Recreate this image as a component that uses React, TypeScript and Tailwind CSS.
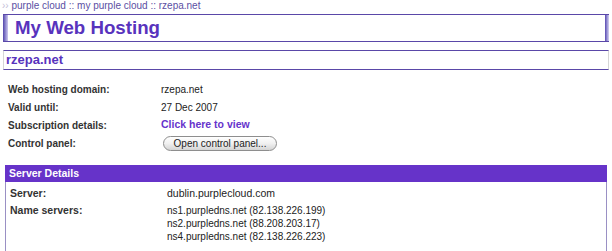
import React from "react";

const rows = [
  { label: "Web hosting domain:", value: "rzepa.net" },
  { label: "Valid until:", value: "27 Dec 2007" },
];

function InfoRow({ label, children }: React.PropsWithChildren<{ label: string }>) {
  return (
    <div className="flex h-[18px] items-center">
      <div className="w-[153px] text-[10px] font-bold text-[#333]">{label}</div>
      <div className="text-[10px] text-[#222]">{children}</div>
    </div>
  );
}

function App() {
  return (
    <div className="w-[612px] h-[251px] overflow-hidden bg-white font-['Liberation_Sans',Arial,sans-serif]">
      <div className="h-[14px] pl-[2px] text-[10px] leading-[12px] text-[#5b4fa3]">
        <span className="text-[#c4c0d8]">››</span> purple cloud :: my purple cloud :: rzepa.net
      </div>

      <div className="mx-[3px] flex h-[28px] border-y border-[#5a47a8]">
        <div className="w-[5px] bg-gradient-to-r from-[#5544aa] to-[#cfc8ee]" />
        <h1 className="flex-1 pl-[7px] text-[18.7px] font-bold leading-[26px] text-[#5833bd]">
          My Web Hosting
        </h1>
        <div className="w-[4px] bg-gradient-to-r from-[#5a47b0] to-[#d8d3f0]" />
      </div>

      <div className="mx-[3px] mt-[8px] h-[20px] border-y border-[#5a47a8] border-x-[#d6d6d6] border-x pl-[2px] text-[13px] font-bold leading-[18px] text-[#5833bd]">
        rzepa.net
      </div>

      <div className="mt-[10px] pl-[8px]">
        {rows.map(r => (
          <InfoRow key={r.label} label={r.label}>
            {r.value}
          </InfoRow>
        ))}
        <InfoRow label="Subscription details:">
          <span className="text-[10.5px] font-bold text-[#6633cc]">Click here to view</span>
        </InfoRow>
        <InfoRow label="Control panel:">
          <button className="ml-[2px] h-[15px] w-[114px] rounded-full border border-[#8e8e8e] bg-gradient-to-b from-white via-[#f0f0f0] to-[#d4d4d4] text-[10px] leading-[13px] text-[#222]">
            Open control panel...
          </button>
        </InfoRow>
      </div>

      <div className="mx-[5px] mt-[13px]">
        <div className="h-[17px] bg-[#6633c9] pl-[4px] text-[10.5px] font-bold leading-[17px] text-white">
          Server Details
        </div>
        <div className="h-[80px] border-x border-[#9a90c4] pl-[4px]">
          <div className="flex h-[20px] items-center pt-[3px]">
            <div className="w-[157px] text-[10.5px] font-bold text-[#333]">Server:</div>
            <div className="text-[10.5px] text-[#222]">dublin.purplecloud.com</div>
          </div>
          <div className="flex pt-[2px] leading-[13px]">
            <div className="w-[157px] text-[10.5px] font-bold text-[#333]">Name servers:</div>
            <div className="text-[10px] text-[#222]">
              <div>ns1.purpledns.net (82.138.226.199)</div>
              <div>ns2.purpledns.net (88.208.203.17)</div>
              <div>ns4.purpledns.net (82.138.226.223)</div>
            </div>
          </div>
        </div>
      </div>
    </div>
  );
}

export default App;
